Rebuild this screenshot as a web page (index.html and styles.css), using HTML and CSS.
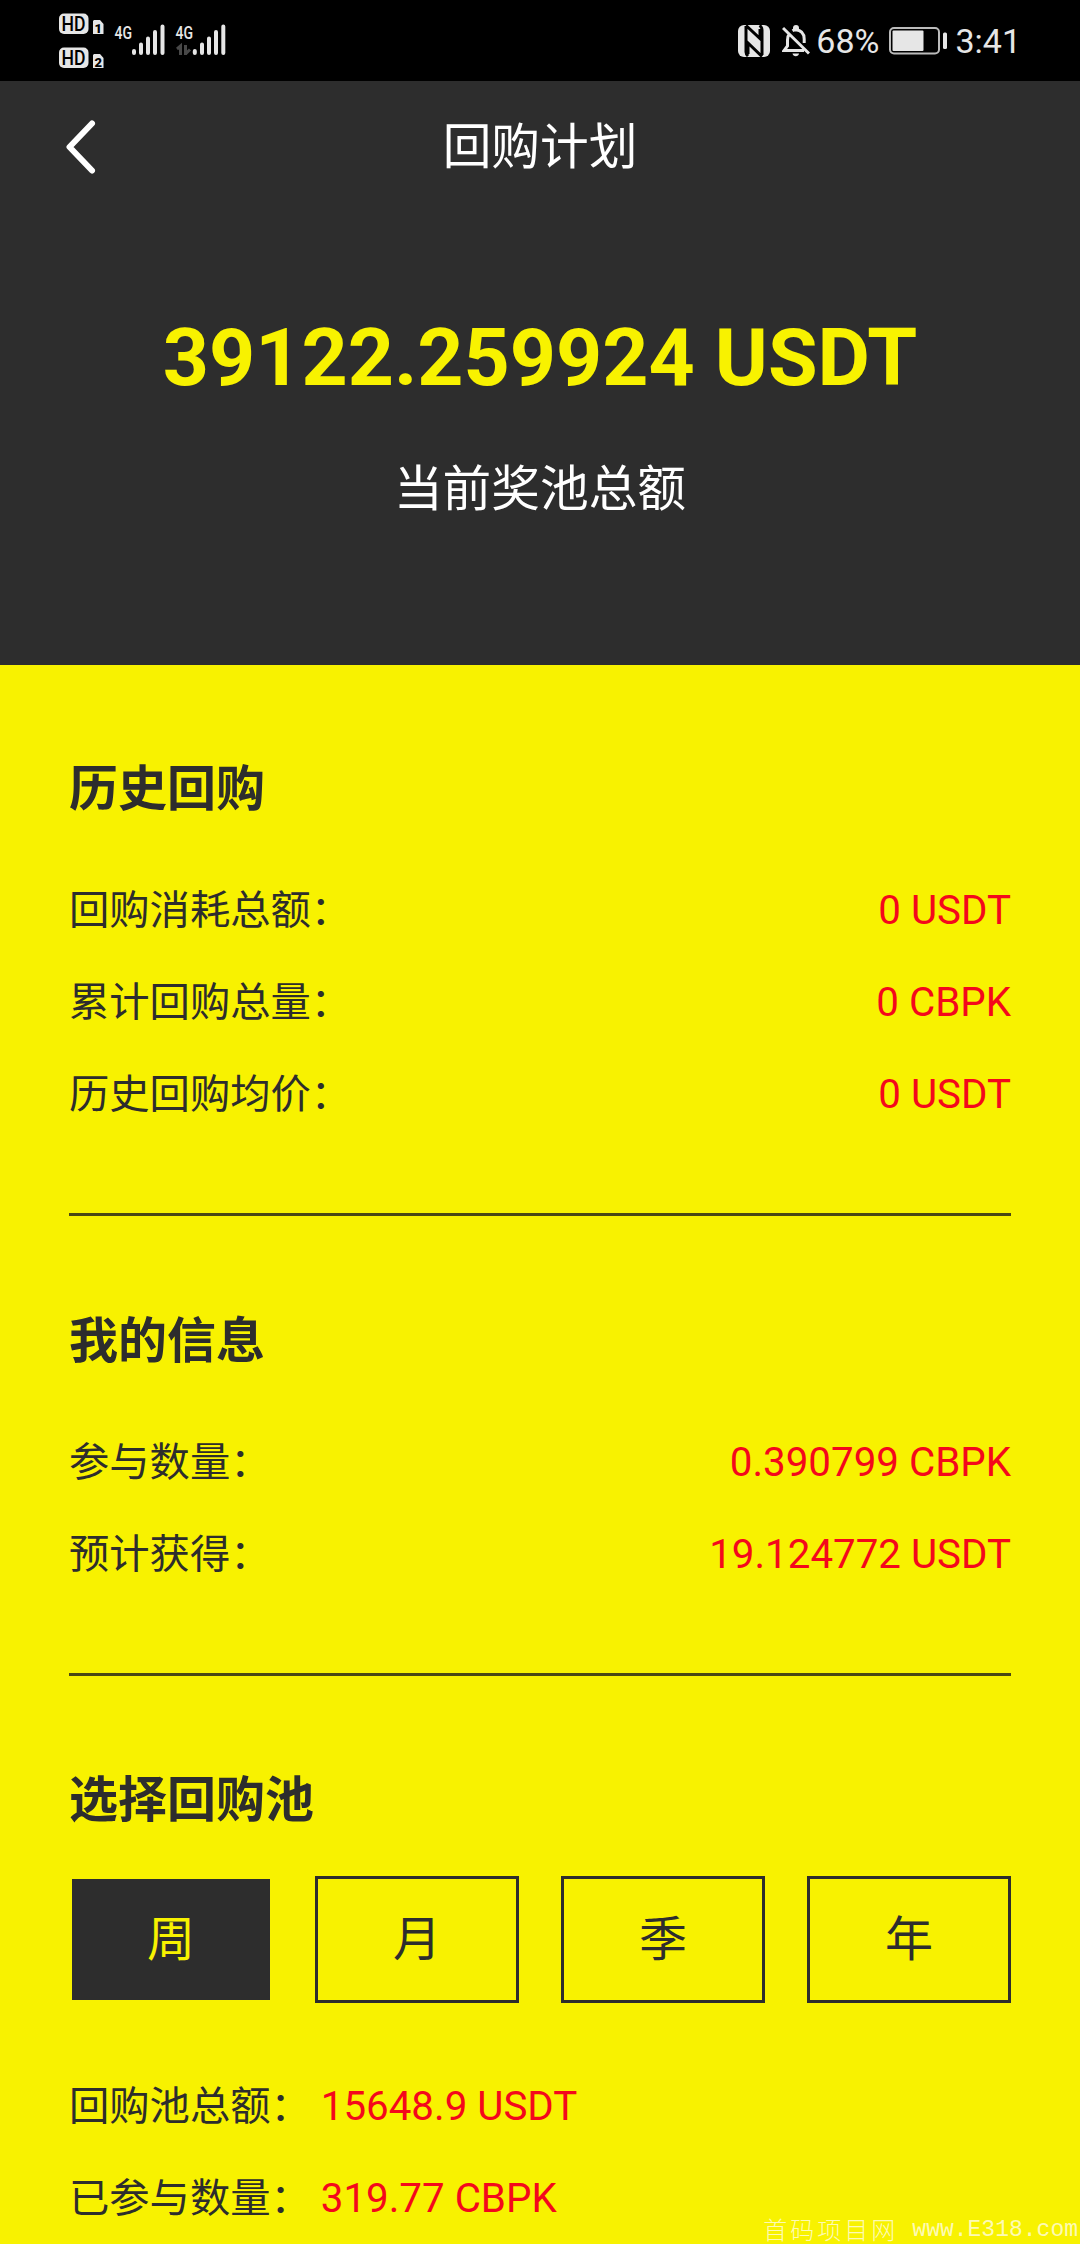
FILE: index.html
```
<!DOCTYPE html>
<html lang="zh-CN">
<head>
    <meta charset="UTF-8">
    <meta name="viewport" content="width=device-width, initial-scale=1.0">
    <title>回购计划</title>
    <link rel="stylesheet" href="styles.css">
</head>
<body>
    <div class="status-bar">
        <svg class="status-left" width="180" height="81" viewBox="50 0 180 81">
            <!-- HD badges -->
            <rect x="59" y="13.5" width="29.5" height="20.5" rx="5"/>
            <text class="hd" x="61.5" y="31" textLength="24" lengthAdjust="spacingAndGlyphs">HD</text>
            <rect x="59" y="47.5" width="29.5" height="20.5" rx="5"/>
            <text class="hd" x="61.5" y="65" textLength="24" lengthAdjust="spacingAndGlyphs">HD</text>
            <!-- SIM cards -->
            <path d="M94 20h6l3.5 4v10H93V21z"/>
            <text class="sim" x="94.5" y="32.5">1</text>
            <path d="M94 54h6l3.5 4v10H93V55z"/>
            <text class="sim" x="94.5" y="66.5">2</text>
            <!-- signal -->
            <text class="net" x="114.5" y="38.7" textLength="17.5" lengthAdjust="spacingAndGlyphs">4G</text>
            <path class="bars" d="M134 51v2M141 44.5v8.5M148 38.5v14.5M155 32v21M162.5 26.5v26.5"/>
            <text class="net" x="175.5" y="38.7" textLength="17.5" lengthAdjust="spacingAndGlyphs">4G</text>
            <path class="bars" d="M194.8 51v2M202 44.5v8.5M209 38.5v14.5M216 32v21M223.3 26.5v26.5"/>
            <path class="arrows" d="M177 49l3.5-3V55M185.5 45v10M185.5 54l4.5-4.5"/>
        </svg>
        <div class="status-right">
            <svg class="nfc" width="32" height="32" viewBox="0 0 32 32">
                <rect width="32" height="32" rx="6"/>
                <path class="nfc-line" d="M8 0.5L22 13.5V4M24 31.5L10 18V29M8 1V27Q8 29 10 31M21.5 0.5Q24 2 24 5V30"/>
            </svg>
            <svg class="bell" width="28" height="32" viewBox="0 0 28 32">
                <path class="bell-line" d="M8 8Q5.5 11 5.5 15V21L2 25.5H22M10.5 5.7Q12 4.8 13.8 4.8Q22 5.5 22.2 14V18M1 3L27 28.5"/>
                <path d="M11 5V3a3 3 0 0 1 6 0v2zM10.5 28.5h6.5q-.5 2.8-3.2 2.8t-3.3-2.8z"/>
            </svg>
            <span class="percent">68%</span>
            <svg class="battery" width="59" height="28" viewBox="0 0 59 28">
                <rect class="battery-case" x="1" y="1" width="49" height="25.5" rx="4"/>
                <rect x="3.5" y="3.5" width="31" height="20.5" rx="1"/>
                <rect x="54" y="5.5" width="4" height="16.5" rx="1.5"/>
            </svg>
            <span class="time">3:41</span>
        </div>
    </div>

    <div class="header">
        <div class="nav">
            <svg class="back" width="34" height="56" viewBox="0 0 34 56">
                <path d="M28 4.5L5.5 28L28 51.5"/>
            </svg>
            <h1>回购计划</h1>
        </div>
        <div class="total">39122.259924 USDT</div>
        <div class="total-label">当前奖池总额</div>
    </div>

    <div class="content">
        <div class="section">
            <h2>历史回购</h2>
            <div class="row"><span>回购消耗总额：</span><span class="value">0 USDT</span></div>
            <div class="row"><span>累计回购总量：</span><span class="value">0 CBPK</span></div>
            <div class="row"><span>历史回购均价：</span><span class="value">0 USDT</span></div>
        </div>
        <div class="section mine">
            <h2>我的信息</h2>
            <div class="row"><span>参与数量：</span><span class="value">0.390799 CBPK</span></div>
            <div class="row"><span>预计获得：</span><span class="value">19.124772 USDT</span></div>
        </div>
        <div class="section pool">
            <h2>选择回购池</h2>
            <div class="tabs">
                <button class="tab active">周</button>
                <button class="tab">月</button>
                <button class="tab">季</button>
                <button class="tab">年</button>
            </div>
            <div class="row"><span>回购池总额：</span><span class="value">15648.9 USDT</span></div>
            <div class="row"><span>已参与数量：</span><span class="value">319.77 CBPK</span></div>
        </div>
    </div>
    <div class="watermark"><span class="site-name">首码项目网</span><span class="site-url">www.E318.com</span></div>
</body>
</html>
```
FILE: styles.css
```
* {
    box-sizing: border-box;
}

body {
    margin: 0;
    height: 2244px;
    overflow: hidden;
    position: relative;
    font-family: Roboto, "Noto Sans CJK SC", sans-serif;
    background-color: #f8f200;
    color: #2d2d2d;
}

/* status bar */
.status-bar {
    display: flex;
    justify-content: space-between;
    height: 81px;
    padding: 0 59px 0 50px;
    background-color: #000;
    color: #e6e6e6;
    fill: #e6e6e6;
}

.hd {
    font-size: 20px;
    font-weight: 500;
    fill: #000;
}

.sim {
    font-size: 13px;
    font-weight: 900;
    fill: #000;
}

.net {
    font-size: 19px;
    font-weight: 500;
}

.bars {
    fill: none;
    stroke: #e6e6e6;
    stroke-width: 4;
    stroke-linecap: round;
}

.arrows {
    fill: none;
    stroke: #484848;
    stroke-width: 3;
}

.status-right {
    display: flex;
    align-items: center;
    font-size: 34px;
}

.nfc {
    margin-right: 12px;
}

.nfc-line {
    fill: none;
    stroke: #000;
    stroke-width: 3;
}

.bell {
    margin-right: 6px;
}

.bell-line {
    fill: none;
    stroke: #e6e6e6;
    stroke-width: 3;
}

.battery {
    margin: 0 7px 0 10px;
}

.battery-case {
    fill: none;
    stroke: #bbb;
    stroke-width: 2;
}

/* header */
.header {
    height: 584px;
    background-color: #2d2d2d;
    color: #fff;
    text-align: center;
}

.nav {
    display: grid;
    grid-template-columns: 120px 1fr 120px;
    align-items: center;
    height: 132px;
}

.back {
    margin-left: 64px;
    fill: none;
    stroke: #fff;
    stroke-width: 6;
    stroke-linecap: round;
    stroke-linejoin: round;
}

h1 {
    margin: 0;
    padding-top: 2px;
    font-size: 48.7px;
    font-weight: 400;
    line-height: 72px;
}

.total {
    margin-top: 95px;
    font-size: 80.6px;
    font-weight: 700;
    line-height: 100px;
    color: #f8f200;
}

.total-label {
    margin-top: 46px;
    font-size: 48.7px;
    line-height: 72px;
}

/* content */
.content {
    padding: 0 69px;
}

.section {
    padding: 87px 0 73px;
    border-bottom: 3px solid #4a4714;
}

.mine {
    padding-top: 88px;
}

h2 {
    margin: 0 0 40px;
    padding-top: 4px;
    font-size: 49px;
    font-weight: 700;
    line-height: 68px;
}

.row {
    display: flex;
    justify-content: space-between;
    height: 92px;
    padding-top: 1px;
    font-size: 40.3px;
    line-height: 91px;
}

.value {
    color: #f4081c;
}

.pool {
    padding-bottom: 0;
    border-bottom: none;
}

.pool h2 {
    margin-bottom: 41px;
}

.pool .row {
    justify-content: flex-start;
    gap: 10px;
}

.tabs {
    display: grid;
    grid-template-columns: repeat(4, 1fr);
    gap: 42px;
    margin-bottom: 57px;
}

.tab {
    height: 127px;
    padding: 0;
    border: 3px solid #2d2d2d;
    background: none;
    color: #2d2d2d;
    font-family: inherit;
    font-size: 48px;
    line-height: 72px;
}

.tab.active {
    border-color: #f8f200;
    background-color: #2d2d2d;
    color: #f8f200;
}

.watermark {
    position: absolute;
    right: 2px;
    bottom: 1px;
    display: flex;
    gap: 14px;
    line-height: 26px;
    color: #fdfab4;
}

.site-name {
    font-family: "Noto Sans CJK SC", sans-serif;
    font-size: 24px;
    font-weight: 300;
    letter-spacing: 3px;
}

.site-url {
    padding-top: 1px;
    font-family: "Liberation Mono", monospace;
    font-size: 23px;
}
```
